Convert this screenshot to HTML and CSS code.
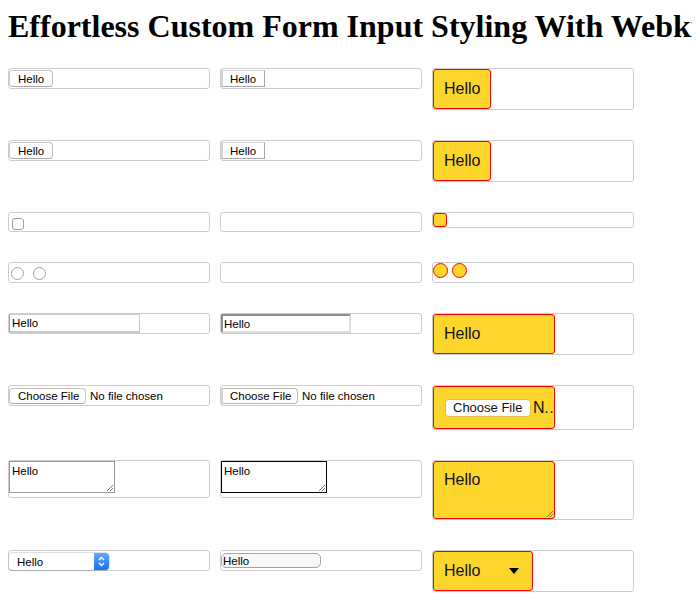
FILE: index.html
```html
<!DOCTYPE html>
<html>

<head>
    <title>Effortless Custom Form Input Styling With Webkit</title>
    <link rel="stylesheet" href="styles.css">
</head>

<body>
    <h1>Effortless Custom Form Input Styling With Webkit</h1>
    <div class="grid">
        <!-- buttons -->
        <div class="cell"><span class="btn native">Hello</span></div>
        <div class="cell"><span class="btn plain">Hello</span></div>
        <div class="cell"><span class="btn fancy">Hello</span></div>

        <div class="cell"><span class="btn native">Hello</span></div>
        <div class="cell"><span class="btn plain">Hello</span></div>
        <div class="cell"><span class="btn fancy">Hello</span></div>

        <!-- checkbox -->
        <div class="cell"><span class="check native"></span></div>
        <div class="cell"><span class="check plain"></span></div>
        <div class="cell"><span class="check fancy"></span></div>

        <!-- radios -->
        <div class="cell"><span class="radio native"></span><span class="radio native"></span></div>
        <div class="cell"><span class="radio plain"></span></div>
        <div class="cell"><span class="radio fancy"></span><span class="radio fancy"></span></div>

        <!-- text input -->
        <div class="cell"><span class="text native">Hello</span></div>
        <div class="cell"><span class="text plain">Hello</span></div>
        <div class="cell"><span class="text fancy">Hello</span></div>

        <!-- file input -->
        <div class="cell">
            <span class="file native"><span class="file-btn">Choose File</span><span class="file-name">No file chosen</span></span>
        </div>
        <div class="cell">
            <span class="file plain"><span class="file-btn">Choose File</span><span class="file-name">No file chosen</span></span>
        </div>
        <div class="cell">
            <span class="file fancy"><span class="file-btn">Choose File</span><span class="file-name">N…</span></span>
        </div>

        <!-- textarea -->
        <div class="cell">
            <span class="area native">Hello
                <svg class="grip" width="7" height="7" viewBox="0 0 7 7"><path d="M1 7 L7 1 M4 7 L7 4" stroke="#777" stroke-width="1" /></svg>
            </span>
        </div>
        <div class="cell">
            <span class="area plain">Hello
                <svg class="grip" width="7" height="7" viewBox="0 0 7 7"><path d="M1 7 L7 1 M4 7 L7 4" stroke="#777" stroke-width="1" /></svg>
            </span>
        </div>
        <div class="cell">
            <span class="area fancy">Hello
                <svg class="grip" width="7" height="7" viewBox="0 0 7 7"><path d="M1 7 L7 1 M4 7 L7 4" stroke="#777" stroke-width="1" /></svg>
            </span>
        </div>

        <!-- select -->
        <div class="cell">
            <span class="select native">Hello
                <svg class="stepper" width="15" height="17" viewBox="0 0 15 17">
                    <defs>
                        <linearGradient id="blue" x1="0" y1="0" x2="0" y2="1">
                            <stop offset="0" stop-color="#64a9fb" />
                            <stop offset="1" stop-color="#1b6ef3" />
                        </linearGradient>
                    </defs>
                    <path d="M0 0 H11 A4 4 0 0 1 15 4 V13 A4 4 0 0 1 11 17 H0 Z" fill="url(#blue)" />
                    <path d="M5 7 L7.5 4.5 L10 7 M5 10 L7.5 12.5 L10 10" stroke="#fff" stroke-width="1.3" fill="none" />
                </svg>
            </span>
        </div>
        <div class="cell"><span class="select plain">Hello</span></div>
        <div class="cell">
            <span class="select fancy">Hello
                <svg width="10" height="6" viewBox="0 0 10 6"><path d="M0 0 H10 L5 6 Z" fill="#000" /></svg>
            </span>
        </div>
    </div>
</body>

</html>
```

FILE: styles.css
```css
body {
    margin: 8px;
    background-color: white;
    font-family: 'Liberation Sans', Arial, sans-serif;
    color: #000;
}

h1 {
    font-family: 'Liberation Serif', 'Times New Roman', serif;
    font-size: 32px;
    line-height: 37px;
    margin: 0 0 23px;
    white-space: nowrap;
}

.grid {
    display: grid;
    grid-template-columns: repeat(3, 202px);
    column-gap: 10px;
    row-gap: 30px;
    align-items: start;
}

.cell {
    box-sizing: border-box;
    display: flex;
    align-items: flex-start;
    border: 1px solid #cdcdcd;
    border-radius: 3px;
}

/* shared look of the native (mac) and unstyled controls */
.native,
.plain {
    font-size: 11.5px;
}

/* the custom yellow controls */
.fancy {
    box-sizing: border-box;
    background-color: #fed52b;
    border: 1px solid #f00;
    border-radius: 3px;
    font-size: 16px;
    color: #111;
}

/* buttons */
.btn {
    box-sizing: border-box;
    display: flex;
    align-items: center;
}

.btn.native {
    height: 17px;
    margin: 1px 0;
    padding: 0 8px;
    background: #fff;
    border: 1px solid #c4c4c4;
    border-bottom-color: #a9a9a9;
    border-radius: 4px;
}

.btn.plain {
    height: 17px;
    margin: 1px 0;
    padding: 0 8px 0 7px;
    background: #fff;
    border: 1px solid #a8a8a8;
    border-left: 2px solid #d4d4d4;
    border-top-color: #d4d4d4;
}

.btn.fancy {
    height: 40px;
    padding: 0 10px;
}

/* checkboxes */
.check.native {
    box-sizing: border-box;
    width: 12px;
    height: 12px;
    margin: 5px 0 1px 3px;
    border: 1px solid #9d9d9d;
    border-radius: 3px;
    background: #fff;
}

.check.plain {
    width: 13px;
    height: 18px;
}

.check.fancy {
    width: 14px;
    height: 14px;
}

/* radios */
.radio.native {
    box-sizing: border-box;
    width: 13px;
    height: 13px;
    margin: 4px 0 2px 2px;
    border: 1px solid #a2a2a2;
    border-radius: 50%;
    background: #fff;
}

.radio.native + .radio.native {
    margin-left: 9px;
}

.radio.plain {
    width: 13px;
    height: 19px;
}

.radio.fancy {
    width: 15px;
    height: 15px;
    margin-bottom: 4px;
    border-radius: 50%;
}

.radio.fancy + .radio.fancy {
    margin-left: 4px;
}

/* text inputs */
.text {
    box-sizing: border-box;
    display: flex;
    align-items: center;
}

.text.native {
    width: 131px;
    height: 19px;
    padding-left: 2px;
    background: #fff;
    border: 1px solid #cbcbcb;
    border-left-color: #a3a3a3;
    border-bottom-width: 2px;
}

.text.plain {
    width: 130px;
    height: 19px;
    padding-left: 1px;
    background: #fff;
    border: 2px solid;
    border-color: #8e8e8e #dedede #dedede #8e8e8e;
}

.text.fancy {
    width: 122px;
    height: 40px;
    padding-left: 10px;
}

/* file inputs */
.file {
    display: flex;
    align-items: center;
    white-space: nowrap;
}

.file.native,
.file.plain {
    margin: 2px 0 1px;
}

.file-btn {
    box-sizing: border-box;
    display: flex;
    flex-shrink: 0;
    align-items: center;
    background: #fff;
}

.native .file-btn {
    width: 77px;
    height: 16px;
    padding-left: 8px;
    border: 1px solid #c4c4c4;
    border-bottom-color: #a9a9a9;
    border-radius: 4px;
}

.plain .file-btn {
    width: 77px;
    height: 16px;
    padding-left: 7px;
    border: 1px solid #b8b8b8;
    border-left: 2px solid #d4d4d4;
    border-radius: 0 4px 4px 0;
}

.file-name {
    flex-shrink: 0;
    margin-left: 4px;
}

.file.fancy {
    width: 122px;
    height: 43px;
    padding: 0 0 0 11px;
    overflow: hidden;
}

.fancy .file-btn {
    width: 86px;
    height: 18px;
    padding-left: 7px;
    font-size: 13px;
    border: 1px solid #e0c24a;
    border-radius: 4px;
}

.fancy .file-name {
    margin-left: 2px;
    letter-spacing: -1px;
}

/* textareas */
.area {
    box-sizing: border-box;
    position: relative;
    display: block;
}

.area.native {
    width: 106px;
    height: 32px;
    margin-bottom: 4px;
    padding: 3px 2px;
    line-height: 13px;
    background: #fff;
    border: 1px solid #9a9a9a;
}

.area.plain {
    width: 106px;
    height: 32px;
    margin-bottom: 4px;
    padding: 3px 2px;
    line-height: 13px;
    background: #fff;
    border: 1px solid #000;
}

.area.fancy {
    width: 122px;
    height: 58px;
    padding: 9px 10px;
}

.grip {
    position: absolute;
    right: 1px;
    bottom: 1px;
}

/* selects */
.select {
    box-sizing: border-box;
    display: flex;
    align-items: center;
}

.select.native {
    width: 100px;
    height: 17px;
    margin: 2px 0 0;
    padding-left: 8px;
    justify-content: space-between;
    background: #fff;
    border-radius: 4px;
    box-shadow: 0 0 0 0.5px #c0c0c0, 0 1px 1px rgba(0, 0, 0, 0.25);
}

.select.plain {
    width: 100px;
    height: 15px;
    margin: 2px 0;
    padding-left: 1px;
    background: #f7f7f7;
    border: 1px solid #a4a4a4;
    border-radius: 5px;
}

.select.fancy {
    width: 100px;
    height: 40px;
    padding: 0 13px 0 10px;
    justify-content: space-between;
}
```
